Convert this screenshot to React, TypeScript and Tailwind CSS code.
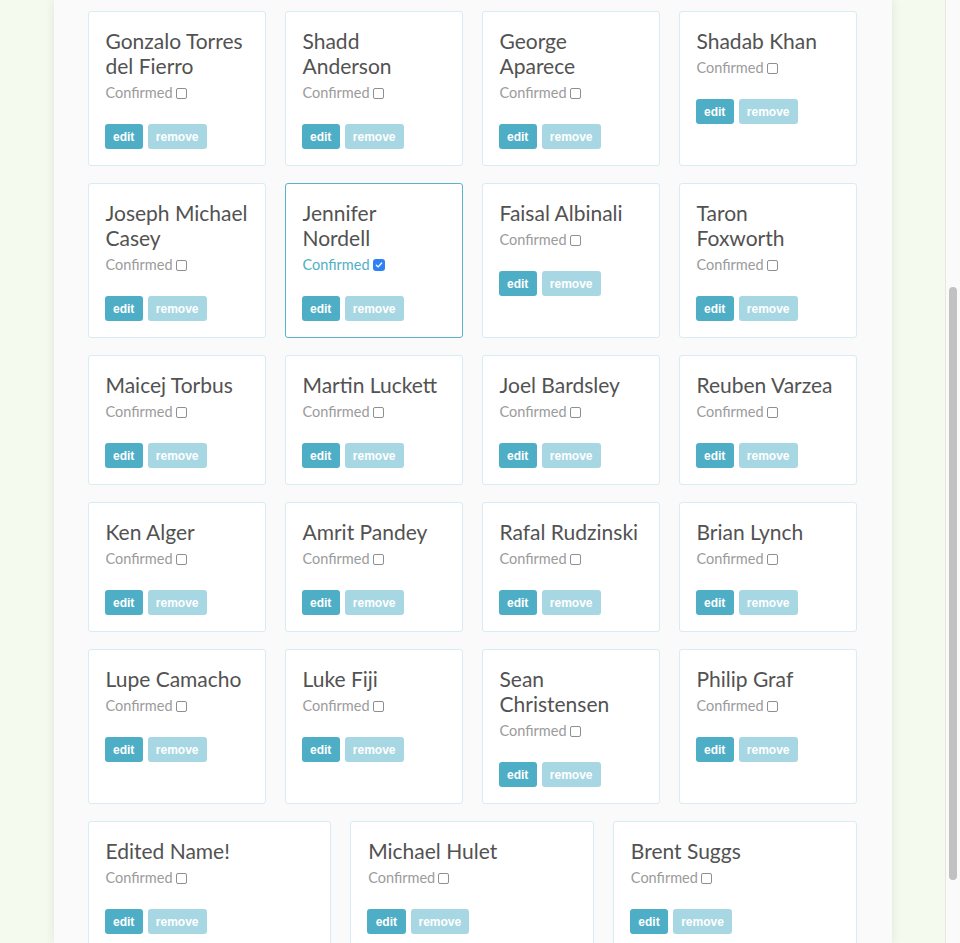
import React from "react";

type Guest = {
  name: string;
  confirmed?: boolean;
  selected?: boolean;
};

// names broken where the card width breaks them
const GUESTS: Guest[] = [
  { name: "Gonzalo Torres\ndel Fierro" },
  { name: "Shadd\nAnderson" },
  { name: "George\nAparece" },
  { name: "Shadab Khan" },
  { name: "Joseph Michael\nCasey" },
  { name: "Jennifer\nNordell", confirmed: true, selected: true },
  { name: "Faisal Albinali" },
  { name: "Taron\nFoxworth" },
  { name: "Maicej Torbus" },
  { name: "Martin Luckett" },
  { name: "Joel Bardsley" },
  { name: "Reuben Varzea" },
  { name: "Ken Alger" },
  { name: "Amrit Pandey" },
  { name: "Rafal Rudzinski" },
  { name: "Brian Lynch" },
  { name: "Lupe Camacho" },
  { name: "Luke Fiji" },
  { name: "Sean\nChristensen" },
  { name: "Philip Graf" },
  { name: "Edited Name!" },
  { name: "Michael Hulet" },
  { name: "Brent Suggs" },
];

function Checkbox({ checked }: { checked?: boolean }) {
  if (checked) {
    return (
      <span className="ml-[3px] inline-flex h-[12px] w-[12px] items-center justify-center rounded-[3px] bg-[#2f80f6]">
        <svg viewBox="0 0 12 12" className="h-[10px] w-[10px]">
          <path d="M2.8 6.2 L5 8.3 L9.2 3.6" fill="none" stroke="#fff" strokeWidth="1.6" strokeLinecap="round" strokeLinejoin="round" />
        </svg>
      </span>
    );
  }
  return <span className="ml-[3px] inline-block h-[11px] w-[11px] rounded-[2px] border border-[#8f8f8f] bg-white" />;
}

function GuestCard({ guest }: { guest: Guest }) {
  return (
    <div
      className={`min-w-0 grow basis-[170px] rounded-[3px] border bg-white pt-[16px] pr-[10px] pb-[16px] pl-[17px] ${
        guest.selected ? "border-[#5ab4ca]" : "border-[#d8ecf3]"
      }`}
    >
      <h3 className="whitespace-pre-line text-[21px] leading-[25px] text-[#525252]">{guest.name}</h3>
      <label
        className={`mt-[5px] flex items-center text-[14.5px] leading-[20px] ${
          guest.selected ? "text-[#4fafc6]" : "text-[#9b9b9b]"
        }`}
      >
        Confirmed
        <Checkbox checked={guest.confirmed} />
      </label>
      <div className="-ml-px mt-[21px] flex gap-[5px] font-['Liberation_Sans',Arial,sans-serif] text-[12px] font-bold text-white">
        <button type="button" className="h-[25px] rounded-[3px] bg-[#4eaec6] px-[8.5px]">
          edit
        </button>
        <button type="button" className="h-[25px] rounded-[3px] bg-[#a7d7e3] px-[8px]">
          remove
        </button>
      </div>
    </div>
  );
}

export default function App() {
  return (
    <div className="flex h-[943px] overflow-hidden bg-[#f4fbee] font-['Lato',sans-serif]">
      <div className="flex-1">
        <main className="mx-auto h-full w-[838px] bg-[#fafafa] shadow-[0_0_10px_rgba(0,0,0,0.09)]">
          <div className="flex flex-wrap gap-x-[19px] gap-y-[17px] pt-[11px] pr-[35px] pl-[34px]">
            {GUESTS.map((g) => (
              <GuestCard key={g.name} guest={g} />
            ))}
          </div>
        </main>
      </div>
      <div className="w-[15px] shrink-0 border-l border-[#e6e6e6] bg-[#fafafa] px-[3px]">
        <div className="mt-[287px] h-[593px] w-[8px] rounded-full bg-[#c1c1c1]" />
      </div>
    </div>
  );
}
